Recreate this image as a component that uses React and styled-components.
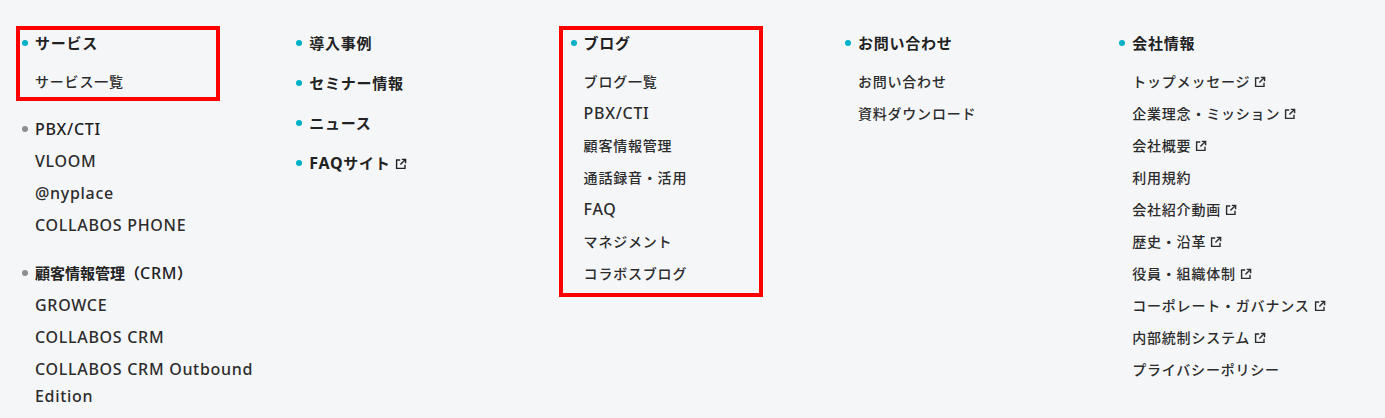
import React from "react";
import styled, { createGlobalStyle } from "styled-components";

const GlobalStyle = createGlobalStyle`
  html, body {
    margin: 0;
    padding: 0;
    background: #f5f6f8;
  }
  body {
    font-family: "Noto Sans", "Noto Sans CJK JP", sans-serif;
    color: #222;
    overflow: hidden;
  }
`;

const columns = [
  {
    groups: [
      { title: "サービス", items: ["サービス一覧"], box: { x: -6, w: 204, h: 75 } },
      { title: "PBX/CTI", sub: true, items: ["VLOOM", "@nyplace", "COLLABOS PHONE"] },
      {
        title: "顧客情報管理（CRM）",
        sub: true,
        items: ["GROWCE", "COLLABOS CRM", "COLLABOS CRM Outbound Edition"],
      },
    ],
  },
  {
    groups: [
      { title: "導入事例", items: [] },
      { title: "セミナー情報", items: [] },
      { title: "ニュース", items: [] },
      { title: "FAQサイト", external: true, items: [] },
    ],
    tight: true,
  },
  {
    groups: [
      {
        title: "ブログ",
        box: { x: -12, w: 204, h: 271 },
        items: ["ブログ一覧", "PBX/CTI", "顧客情報管理", "通話録音・活用", "FAQ", "マネジメント", "コラボスブログ"],
      },
    ],
  },
  {
    groups: [{ title: "お問い合わせ", items: ["お問い合わせ", "資料ダウンロード"] }],
  },
  {
    groups: [
      {
        title: "会社情報",
        items: [
          { label: "トップメッセージ", external: true },
          { label: "企業理念・ミッション", external: true },
          { label: "会社概要", external: true },
          "利用規約",
          { label: "会社紹介動画", external: true },
          { label: "歴史・沿革", external: true },
          { label: "役員・組織体制", external: true },
          { label: "コーポレート・ガバナンス", external: true },
          { label: "内部統制システム", external: true },
          "プライバシーポリシー",
        ],
      },
    ],
  },
];

// latin runs are set a size up from the kana around them
function Mixed({ text, bold }) {
  return text
    .split(/([A-Za-z@/ ]+)/)
    .filter(Boolean)
    .map((part, i) =>
      /^[A-Za-z@/ ]+$/.test(part) ? (
        <Latin key={i} $bold={bold}>
          {part}
        </Latin>
      ) : (
        part
      )
    );
}

function ExternalIcon() {
  return (
    <Ext viewBox="0 0 12 12" fill="none" stroke="currentColor" strokeWidth="1.4">
      <path d="M5.2 2H1.6v8.4H10V6.8" />
      <path d="M6.8 1.4h3.8v3.8M10.4 1.6 5.4 6.6" />
    </Ext>
  );
}

function Group({ group }) {
  return (
    <GroupBlock $sub={group.sub}>
      {group.box && <Highlight $x={group.box.x} $w={group.box.w} $h={group.box.h} />}
      <Title $sub={group.sub}>
        <Mixed text={group.title} bold={!group.sub} />
        {group.external && <ExternalIcon />}
      </Title>
      {group.items.length > 0 && (
        <List $sub={group.sub}>
          {group.items.map((item) => {
            const label = item.label || item;
            return (
              <Item key={label}>
                <Mixed text={label} />
                {item.external && <ExternalIcon />}
              </Item>
            );
          })}
        </List>
      )}
    </GroupBlock>
  );
}

export default function App() {
  return (
    <>
      <GlobalStyle />
      <Page>
        {columns.map((col, i) => (
          <Column key={i} $tight={col.tight}>
            {col.groups.map((g) => (
              <Group key={g.title} group={g} />
            ))}
          </Column>
        ))}
      </Page>
    </>
  );
}

const Page = styled.div`
  display: grid;
  grid-template-columns: repeat(5, 274.3px);
  height: 418px;
  box-sizing: border-box;
  padding: 29px 0 0 22px;
  background: #f5f6f8;
`;

const Column = styled.div`
  display: flex;
  flex-direction: column;
  gap: ${(p) => (p.$tight ? "12px" : "0")};
  padding-right: 20px;
`;

const GroupBlock = styled.section`
  position: relative;
  margin-bottom: ${(p) => (p.$sub ? "20px" : "0")};
  &:first-child:not(:last-child) > ul {
    margin-bottom: 20px;
  }
`;

const Highlight = styled.div`
  position: absolute;
  left: ${(p) => p.$x}px;
  top: -3px;
  box-sizing: border-box;
  width: ${(p) => p.$w}px;
  height: ${(p) => p.$h}px;
  border: 4px solid #f00;
  pointer-events: none;
`;

const Title = styled.div`
  position: relative;
  padding-left: 13px;
  font-size: 15px;
  font-weight: 700;
  line-height: 28px;
  height: 28px;
  letter-spacing: ${(p) => (p.$sub ? "0" : "0.75px")};
  color: #222;

  &::before {
    content: "";
    position: absolute;
    left: 0;
    top: 11px;
    width: 6px;
    height: 6px;
    border-radius: 50%;
    background: ${(p) => (p.$sub ? "#8b8f94" : "#00b0c8")};
  }
`;

const List = styled.ul`
  list-style: none;
  margin: 0;
  padding: ${(p) => (p.$sub ? "0" : "6px")} 0 0 13px;
`;

const Item = styled.li`
  font-size: 14px;
  font-weight: 500;
  line-height: 27px;
  letter-spacing: 0.8px;
  color: #2c2c2c;
  margin-top: 5px;
`;

const Latin = styled.span`
  font-size: 16px;
  font-weight: ${(p) => (p.$bold ? 700 : 500)};
  line-height: 1;
  letter-spacing: 0.7px;
`;

const Ext = styled.svg`
  display: inline-block;
  width: 12px;
  height: 12px;
  margin-left: 4px;
  vertical-align: -1px;
`;
